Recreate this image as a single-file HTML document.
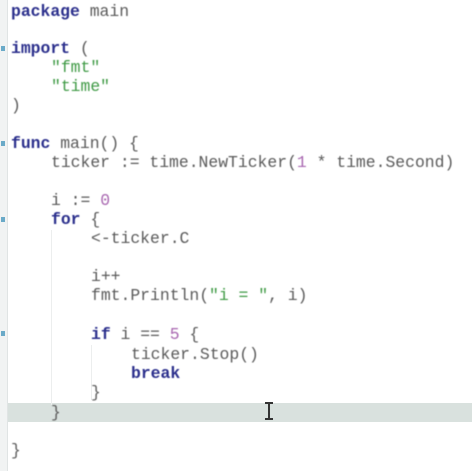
<!DOCTYPE html>
<html><head><style>
html,body{margin:0;padding:0;width:472px;height:471px;overflow:hidden;background:#fff}
.g{position:absolute;left:0;top:0;width:7px;height:471px;background:#f1f3f3;border-right:1px solid #e0e4e4}
.hl{position:absolute;left:8px;top:403px;width:464px;height:19px;background:#d9e1de}
.l{position:absolute;font-family:"Liberation Mono",monospace;font-size:16.4px;line-height:19px;color:#5a5a5a;white-space:pre;filter:blur(0.45px)}
.k{color:#2b2f8c;font-weight:bold}
.s{color:#3f9a45}
.n{color:#a866b0}
.m{position:absolute;left:1px;width:4px;height:5px;background:#6aaac8}
.v{position:absolute;width:1px;background:#eceeee}
</style></head><body>
<div class="g"></div>
<div class="hl"></div>
<div class="m" style="top:46px"></div>
<div class="m" style="top:141px"></div>
<div class="m" style="top:217px"></div>
<div class="m" style="top:331px"></div>
<div class="v" style="left:51px;top:230px;height:175px"></div>
<div class="v" style="left:91px;top:345px;height:55px"></div>
<div class="l" style="top:2px;left:11px"><span class="k">package</span> main</div>
<div class="l" style="top:39px;left:11px"><span class="k">import</span> (</div>
<div class="l" style="top:58px;left:51px"><span class="s">"fmt"</span></div>
<div class="l" style="top:77px;left:51px"><span class="s">"time"</span></div>
<div class="l" style="top:96px;left:11px">)</div>
<div class="l" style="top:134px;left:11px"><span class="k">func</span> main() {</div>
<div class="l" style="top:153px;left:51px">ticker := time.NewTicker(<span class="n">1</span> * time.Second)</div>
<div class="l" style="top:191px;left:51px">i := <span class="n">0</span></div>
<div class="l" style="top:210px;left:51px"><span class="k">for</span> {</div>
<div class="l" style="top:229px;left:91px">&lt;-ticker.C</div>
<div class="l" style="top:267px;left:91px">i++</div>
<div class="l" style="top:286px;left:91px">fmt.Println(<span class="s">"i = "</span>, i)</div>
<div class="l" style="top:325px;left:91px"><span class="k">if</span> i == <span class="n">5</span> {</div>
<div class="l" style="top:345px;left:131px">ticker.Stop()</div>
<div class="l" style="top:364px;left:131px"><span class="k">break</span></div>
<div class="l" style="top:383px;left:91px">}</div>
<div class="l" style="top:403px;left:51px">}</div>
<div class="l" style="top:441px;left:11px">}</div>
<div style="position:absolute;left:263px;top:402px;width:12px;height:18px">
<div style="position:absolute;left:5px;top:1px;width:2px;height:16px;background:#333"></div>
<div style="position:absolute;left:2px;top:0;width:8px;height:2px;background:#333"></div>
<div style="position:absolute;left:2px;top:16px;width:8px;height:2px;background:#333"></div>
</div>
</body></html>
